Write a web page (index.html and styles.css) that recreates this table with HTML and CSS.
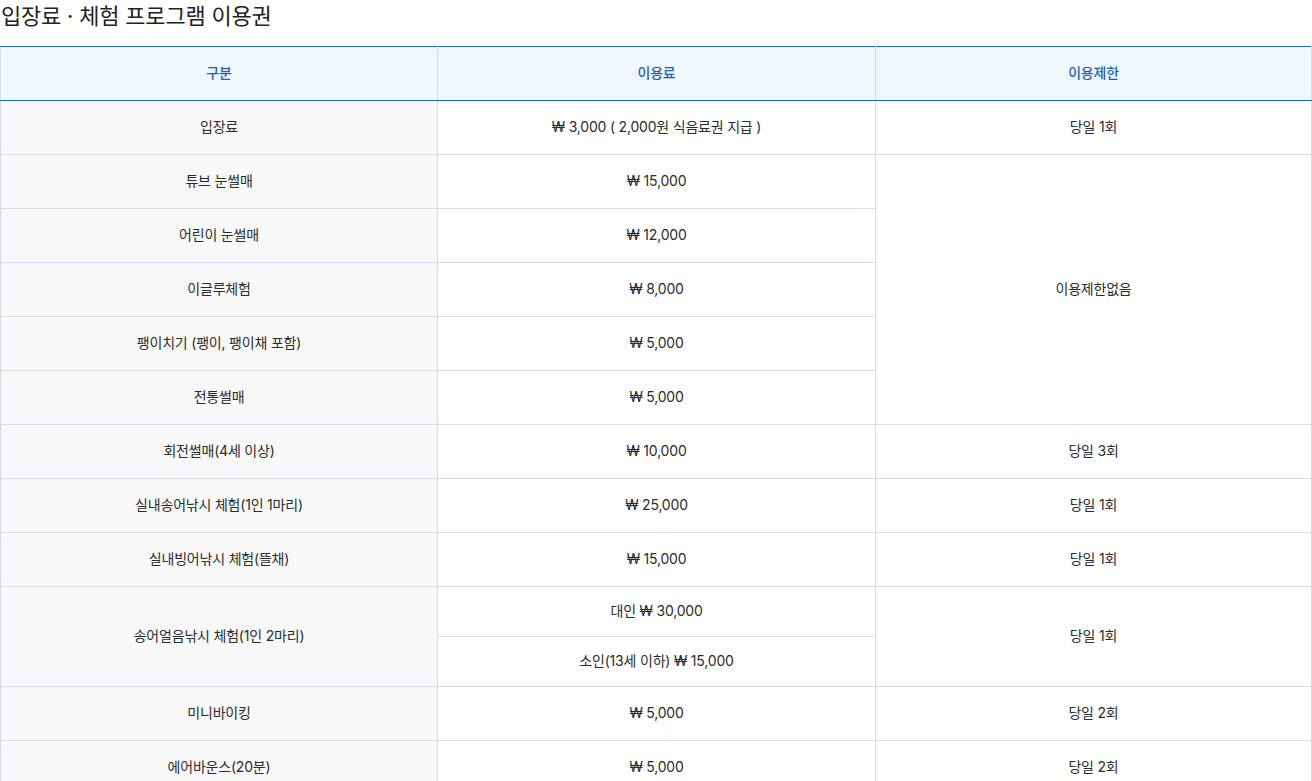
FILE: index.html
```html
<!DOCTYPE html>
<html lang="ko">
<head>
<meta charset="utf-8">
<title>입장료 · 체험 프로그램 이용권</title>
<link rel="stylesheet" href="styles.css">
</head>
<body>
<h2 class="title">입장료 · 체험 프로그램 이용권</h2>
<table class="fee">
  <colgroup><col class="c1"><col class="c2"><col class="c3"></colgroup>
  <thead>
    <tr><th>구분</th><th>이용료</th><th>이용제한</th></tr>
  </thead>
  <tbody>
    <tr><td class="name">입장료</td><td>₩ 3,000 ( 2,000원 식음료권 지급 )</td><td>당일 1회</td></tr>
    <tr><td class="name">튜브 눈썰매</td><td>₩ 15,000</td><td rowspan="5">이용제한없음</td></tr>
    <tr><td class="name">어린이 눈썰매</td><td>₩ 12,000</td></tr>
    <tr><td class="name">이글루체험</td><td>₩ 8,000</td></tr>
    <tr><td class="name">팽이치기 (팽이, 팽이채 포함)</td><td>₩ 5,000</td></tr>
    <tr><td class="name">전통썰매</td><td>₩ 5,000</td></tr>
    <tr><td class="name">회전썰매(4세 이상)</td><td>₩ 10,000</td><td>당일 3회</td></tr>
    <tr><td class="name">실내송어낚시 체험(1인 1마리)</td><td>₩ 25,000</td><td>당일 1회</td></tr>
    <tr><td class="name">실내빙어낚시 체험(뜰채)</td><td>₩ 15,000</td><td>당일 1회</td></tr>
    <tr class="sub"><td class="name" rowspan="2">송어얼음낚시 체험(1인 2마리)</td><td>대인 ₩ 30,000</td><td rowspan="2">당일 1회</td></tr>
    <tr class="sub"><td>소인(13세 이하) ₩ 15,000</td></tr>
    <tr><td class="name">미니바이킹</td><td>₩ 5,000</td><td>당일 2회</td></tr>
    <tr><td class="name">에어바운스(20분)</td><td>₩ 5,000</td><td>당일 2회</td></tr>
  </tbody>
</table>
</body>
</html>
```
FILE: styles.css
```css
html, body {
  margin: 0;
  padding: 0;
  background: #fff;
}
body {
  font-family: "Inter", "Noto Sans CJK KR", "Noto Sans", sans-serif;
  color: #333;
}
.title {
  margin: 0;
  padding: 1px 0 0 1px;
  height: 46px;
  box-sizing: border-box;
  font-size: 22px;
  font-weight: 400;
  line-height: 30px;
  color: #222;
  letter-spacing: -0.2px;
}
.fee {
  width: 100%;
  border-collapse: collapse;
  table-layout: fixed;
  font-size: 14px;
  color: #2b2b2b;
  letter-spacing: -0.2px;
}
.fee .c1 { width: 437px; }
.fee .c2 { width: 438px; }
.fee th, .fee td {
  border: 1px solid #d3dde8;
  text-align: center;
  vertical-align: middle;
  padding: 0 10px 3px;
  height: 50px;
  font-weight: 400;
}
.fee thead th {
  background: #eef6fe;
  color: #1f63a8;
  font-weight: 500;
  border-top: 1px solid #1e67b3;
  border-bottom: 1px solid #1e67b3;
}
.fee td.name {
  background: #f8f8f8;
}
.fee tr.sub td {
  height: 46px;
}
.fee tr.sub td[rowspan] {
  height: auto;
}
```
